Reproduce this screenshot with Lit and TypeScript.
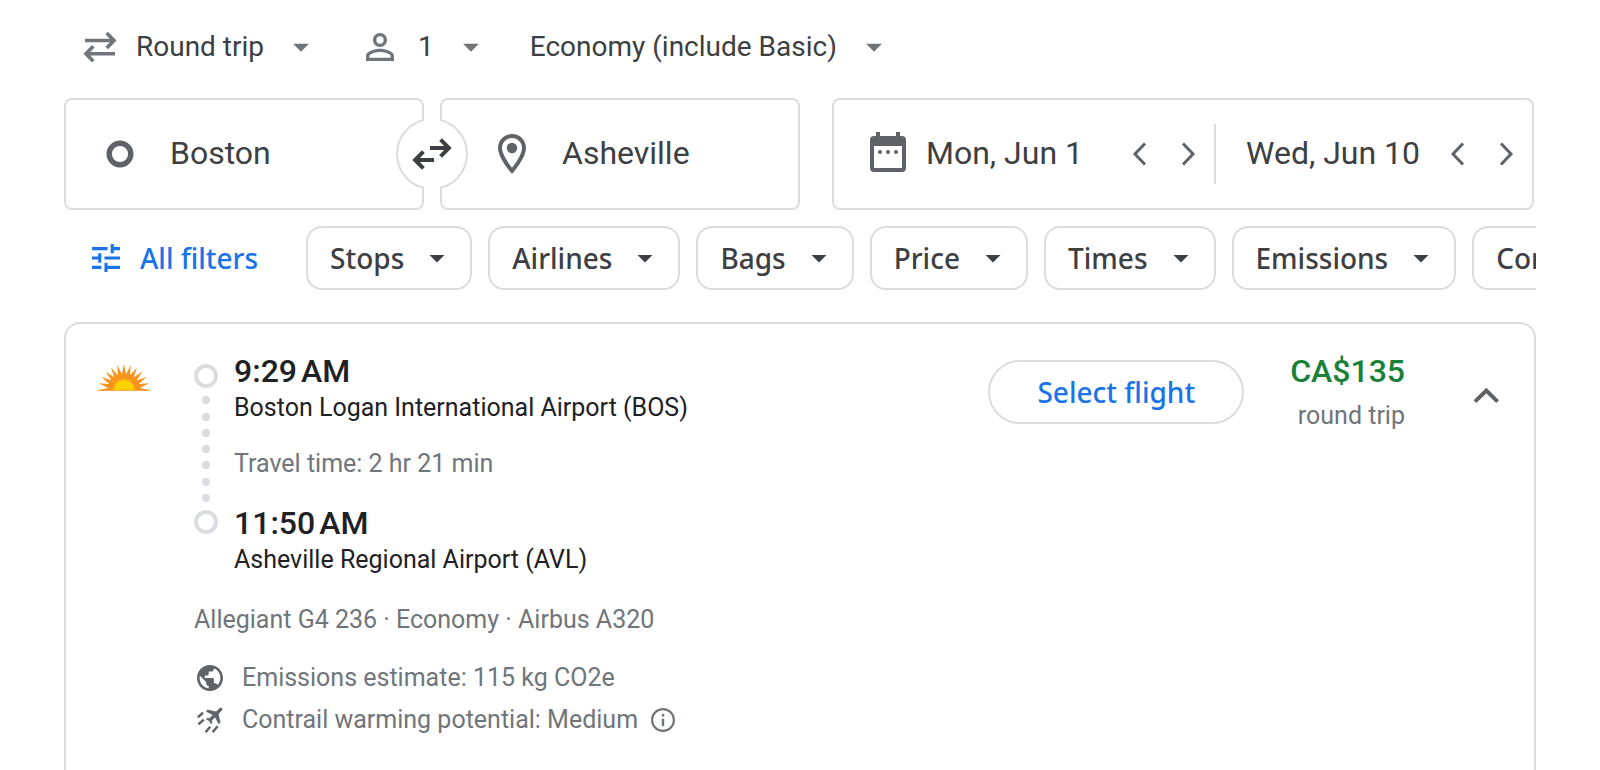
import { LitElement, html, css } from "lit";
import { customElement, state } from "lit/decorators.js";

const FILTERS = ["Stops", "Airlines", "Bags", "Price", "Times", "Emissions", "Connecting airports"];

const caret = html`<svg class="caret" viewBox="0 0 24 24" aria-hidden="true"><path d="M7 10l5 5 5-5z" /></svg>`;

const chevron = (d: string) =>
  html`<svg class="line-icon chevron" viewBox="0 0 36 36" aria-hidden="true"><path d=${d} /></svg>`;

/** Points of a half-circle star whose centre is (26, 26). */
function rays(count: number, outer: number, inner: number): string {
  const pts: string[] = [];
  const steps = (count - 1) * 2;
  for (let i = 0; i <= steps; i++) {
    const r = i % 2 === 0 ? outer : inner;
    const a = Math.PI * (1 - i / steps);
    pts.push(`${(26 + r * Math.cos(a)).toFixed(2)},${(26 - r * Math.sin(a)).toFixed(2)}`);
  }
  return pts.join(" ");
}

@customElement("app-root")
class AppRoot extends LitElement {
  @state() private from = "Boston";
  @state() private to = "Asheville";

  static styles = css`
    :host {
      display: flex;
      flex-direction: column;
      box-sizing: border-box;
      min-height: 100vh;
      padding: 28px 64px 0;
      background: #fff;
      color: #3c4043;
      font-family: Roboto, "Liberation Sans", sans-serif;
      font-size: 28px;
      line-height: 36px;
    }
    * { box-sizing: border-box; }
    button, input, select {
      margin: 0;
      padding: 0;
      border: 0;
      background: none;
      color: inherit;
      font: inherit;
      cursor: pointer;
    }
    svg { display: block; flex: none; fill: currentColor; }
    .caret { width: 36px; height: 36px; pointer-events: none; }

    .trip { display: flex; align-items: center; gap: 40px; padding-left: 18px; }
    .option { display: flex; align-items: center; }
    .option select { appearance: none; field-sizing: content; }
    .option .caret { width: 38px; height: 38px; margin-left: 18px; color: #70757a; }
    .option .lead { margin-right: 18px; color: #70757a; }
    .line-icon { fill: none; stroke: currentColor; }
    .both-ways { width: 36px; height: 36px; stroke-width: 3.6; }
    .person { width: 40px; height: 28px; }

    .search {
      display: grid;
      grid-template-columns: 736fr 702fr;
      gap: 32px;
      margin-top: 32px;
      padding-right: 2px;
    }
    .places { position: relative; display: grid; grid-template-columns: 1fr 1fr; gap: 16px; }
    .box {
      display: flex;
      align-items: center;
      min-width: 0;
      height: 112px;
      border: 2px solid #dadce0;
      border-radius: 8px;
    }
    .box input {
      flex: 1;
      width: 0;
      min-width: 0;
      height: 64px;
      padding-bottom: 2px;
      font-size: 32px;
      outline: none;
    }
    .box label { display: flex; flex: none; color: #5f6368; }
    .origin { padding-left: 40px; }
    .box label + input { margin-left: 36px; }
    .circle { width: 28px; height: 28px; stroke-width: 5.4; }
    .destination { padding-left: 56px; }
    .pin { width: 28px; height: 40px; }
    .swap {
      position: absolute;
      top: 50%;
      left: 50%;
      width: 72px;
      height: 72px;
      transform: translate(-50%, -50%);
      border: 2px solid #dadce0;
      border-radius: 50%;
      background: #fff;
      display: flex;
      align-items: center;
      justify-content: center;
    }
    .swap::before {
      content: "";
      position: absolute;
      inset: -2px 26px;
      background: #fff;
    }
    .swap svg { position: relative; width: 40px; height: 40px; stroke-width: 4; }

    .dates { display: grid; grid-template-columns: 382fr 316fr; }
    .date { display: flex; align-items: center; min-width: 0; height: 60px; padding-right: 2px; }
    .depart { padding-left: 36px; border-right: 2px solid #dadce0; }
    .depart label + input { margin-left: 20px; }
    .return { padding-left: 30px; }
    .calendar { width: 36px; height: 44px; }
    .step {
      display: flex;
      flex: none;
      align-items: center;
      justify-content: center;
      width: 48px;
      height: 48px;
      color: #5f6368;
    }
    .chevron { width: 36px; height: 36px; stroke-width: 3; }

    .filters {
      display: flex;
      gap: 16px;
      margin-top: 16px;
      overflow: hidden;
      font-family: "Noto Sans", sans-serif;
      font-weight: 500;
    }
    .all {
      display: flex;
      flex: none;
      align-items: center;
      gap: 20px;
      height: 64px;
      padding: 0 32px 0 28px;
      color: #1a73e8;
    }
    .tune { width: 28px; height: 28px; }
    .chip {
      display: flex;
      flex: none;
      align-items: center;
      gap: 15px;
      height: 64px;
      padding: 0 15px 0 22px;
      border: 2px solid #dadce0;
      border-radius: 16px;
      white-space: nowrap;
    }

    .card {
      display: flex;
      flex: 1;
      align-items: flex-start;
      margin-top: 32px;
      padding: 28px 28px 32px 32px;
      border: 2px solid #dadce0;
      border-bottom: 0;
      border-radius: 16px 16px 0 0;
      color: #70757a;
      font-size: 25px;
      line-height: 32px;
    }
    .logo { width: 52px; height: 28px; margin-top: 12px; }
    .details { flex: 1; min-width: 0; margin-left: 44px; }
    .leg { display: grid; grid-template-columns: 24px 1fr; column-gap: 16px; }
    .track {
      display: flex;
      flex-direction: column;
      align-items: center;
      justify-content: space-between;
      padding: 12px 0 42px;
    }
    .stop { width: 24px; height: 24px; border: 4px solid #dadce0; border-radius: 50%; }
    .dot { width: 8px; height: 8px; border-radius: 50%; background: #dadce0; }
    .time, .price { font-size: 32px; font-weight: 500; line-height: 38px; }
    .time, .airport { color: #202124; }
    p { margin: 0; }
    .airport { margin-top: 2px; }
    .travel { margin: 24px 0; }
    .flight { margin-top: 28px; }
    .facts { display: grid; row-gap: 10px; margin-top: 26px; }
    .fact { display: flex; align-items: center; gap: 19px; padding-left: 3px; }
    .fact svg { width: 26px; height: 26px; color: #5f6368; }
    .info { display: flex; margin-left: -6px; }
    .info svg { width: 24px; height: 24px; color: #70757a; }

    .select {
      flex: none;
      height: 64px;
      margin-top: 8px;
      padding: 0 47px;
      border: 2px solid #dadce0;
      border-radius: 32px;
      color: #1a73e8;
      font: 500 28px/36px "Noto Sans", sans-serif;
    }
    .fare { flex: none; margin-left: 46px; text-align: right; }
    .price { color: #188038; }
    .fare-type { margin-top: 10px; }
    .collapse {
      display: flex;
      flex: none;
      width: 40px;
      height: 40px;
      margin: 24px 0 0 61px;
      color: #5f6368;
    }
    .collapse svg { width: 40px; height: 40px; stroke-width: 4; }
  `;

  private swap() {
    [this.from, this.to] = [this.to, this.from];
  }

  private steps(label: string) {
    return html`
      <button class="step" aria-label="Earlier ${label}">${chevron("M23 7.5 13 18l10 10.5")}</button>
      <button class="step" aria-label="Later ${label}">${chevron("M13 7.5 23 18 13 28.5")}</button>
    `;
  }

  render() {
    return html`
      <div class="trip">
        <div class="option">
          <svg class="lead line-icon both-ways" viewBox="0 0 36 36" aria-hidden="true">
            <path d="M3 11.5h29M24.7 4l7.3 7.5-7.3 7.5M33 24.7H4M11.3 17.2 4 24.7l7.3 7.5" />
          </svg>
          <select aria-label="Ticket type"><option>Round trip</option></select>
          ${caret}
        </div>
        <button class="option" aria-label="1 passenger">
          <svg class="lead person" viewBox="4 4 16 16" aria-hidden="true">
            <path d="M12 5.9a2.1 2.1 0 1 1 0 4.2 2.1 2.1 0 0 1 0-4.2m0 9c2.97 0 6.1 1.46 6.1 2.1v1.1H5.9V17c0-.64 3.13-2.1 6.1-2.1M12 4C9.79 4 8 5.79 8 8s1.79 4 4 4 4-1.79 4-4-1.79-4-4-4zm0 9c-2.67 0-8 1.34-8 4v3h16v-3c0-2.66-5.33-4-8-4z" />
          </svg>
          <span>1</span>
          ${caret}
        </button>
        <div class="option">
          <select aria-label="Seating class"><option>Economy (include Basic)</option></select>
          ${caret}
        </div>
      </div>

      <div class="search">
        <div class="places">
          <div class="box origin">
            <label for="from" aria-label="Where from?">
              <svg class="line-icon circle" viewBox="0 0 28 28"><circle cx="14" cy="14" r="10.8" /></svg>
            </label>
            <input id="from" .value=${this.from} />
          </div>
          <div class="box destination">
            <label for="to" aria-label="Where to?">
              <svg class="pin" viewBox="5 2 14 20">
                <path d="M12 2C8.1 2 5 5.1 5 9c0 5.2 7 13 7 13s7-7.8 7-13c0-3.9-3.1-7-7-7zM7 9c0-2.8 2.2-5 5-5s5 2.2 5 5c0 2.9-2.9 7.2-5 9.9C9.9 16.2 7 11.8 7 9z" />
                <circle cx="12" cy="9" r="2.6" />
              </svg>
            </label>
            <input id="to" .value=${this.to} />
          </div>
          <button class="swap" aria-label="Swap origin and destination" @click=${this.swap}>
            <svg class="line-icon" viewBox="0 0 40 40" aria-hidden="true">
              <path d="M18 14h19M28.6 5.7l8.3 8.3-8.3 8.3M22 26H3M11.4 17.7 3.1 26l8.3 8.3" />
            </svg>
          </button>
        </div>

        <div class="box dates">
          <div class="date depart">
            <label for="depart" aria-label="Departure">
              <svg class="calendar" viewBox="0 0 36 44">
                <path fill-rule="evenodd" d="M6 0h4v4h16V0h4v4h2a4 4 0 0 1 4 4v28a4 4 0 0 1-4 4H4a4 4 0 0 1-4-4V8a4 4 0 0 1 4-4h2zM4 14v22h28V14z" />
                <circle cx="10" cy="20" r="2" /><circle cx="18" cy="20" r="2" /><circle cx="26" cy="20" r="2" />
              </svg>
            </label>
            <input id="depart" value="Mon, Jun 1" />
            ${this.steps("departure")}
          </div>
          <div class="date return">
            <input aria-label="Return" value="Wed, Jun 10" />
            ${this.steps("return")}
          </div>
        </div>
      </div>

      <div class="filters">
        <button class="all">
          <svg class="tune" viewBox="3 3 18 18" aria-hidden="true">
            <path d="M3 17v2h6v-2H3zM3 5v2h10V5H3zm10 16v-2h8v-2h-8v-2h-2v6h2zM7 9v2H3v2h4v2h2V9H7zm14 4v-2H11v2h10zm-6-4h2V7h4V5h-4V3h-2v6z" />
          </svg>
          All filters
        </button>
        ${FILTERS.map((name) => html`<button class="chip">${name}${caret}</button>`)}
      </div>

      <section class="card">
        <svg class="logo" viewBox="0 0 52 28" role="img" aria-label="Allegiant">
          <polygon fill="#f7941e" points=${rays(13, 26, 16)} />
          <polygon fill="#ffd200" points=${rays(13, 12, 9)} />
          <path fill="#f9a545" d="M0 26h52v1H0z" />
        </svg>

        <div class="details">
          <div class="leg">
            <div class="track" aria-hidden="true">
              <span class="stop"></span>
              ${Array.from({ length: 7 }, () => html`<span class="dot"></span>`)}
              <span class="stop"></span>
            </div>
            <div>
              <p class="time">9:29\u202fAM</p>
              <p class="airport">Boston Logan International Airport (BOS)</p>
              <p class="travel">Travel time: 2 hr 21 min</p>
              <p class="time">11:50\u202fAM</p>
              <p class="airport">Asheville Regional Airport (AVL)</p>
            </div>
          </div>
          <p class="flight">Allegiant G4 236 · Economy · Airbus A320</p>
          <div class="facts">
            <div class="fact">
              <svg viewBox="2 2 20 20" aria-hidden="true">
                <path d="M12 2C6.48 2 2 6.48 2 12s4.48 10 10 10 10-4.48 10-10S17.52 2 12 2zm-1 17.93c-3.95-.49-7-3.85-7-7.93 0-.62.08-1.21.21-1.79L9 15v1c0 1.1.9 2 2 2v1.93zm6.9-2.54c-.26-.81-1-1.39-1.9-1.39h-1v-3c0-.55-.45-1-1-1H8v-2h2c.55 0 1-.45 1-1V7h2c1.1 0 2-.9 2-2v-.41c2.93 1.19 5 4.06 5 7.41 0 2.08-.8 3.97-2.1 5.39z" />
              </svg>
              <span>Emissions estimate: 115 kg CO2e</span>
            </div>
            <div class="fact">
              <svg viewBox="0 0 26 26" aria-hidden="true">
                <path stroke="currentColor" stroke-width=".8" transform="translate(18.2 7.9) rotate(45) scale(.92) translate(-11.5 -12)" d="M21 16v-2l-8-5V3.5c0-.83-.67-1.5-1.5-1.5S10 2.67 10 3.5V9l-8 5v2l8-2.5V19l-2 1.5V22l3.5-1 3.5 1v-1.5L13 19v-5.5l8 2.5z" />
                <path fill="none" stroke="currentColor" stroke-width="2.5" d="M.8 10.2 6 5.8M1.4 17.2l5.4-4.6M8.6 25.2l4.6-5.4M15.6 25.2l5-6" />
              </svg>
              <span>Contrail warming potential: Medium</span>
              <button class="info" aria-label="About contrail warming potential">
                <svg viewBox="2 2 20 20" aria-hidden="true">
                  <path d="M11 7h2v2h-2zm0 4h2v6h-2zm1-9C6.48 2 2 6.48 2 12s4.48 10 10 10 10-4.48 10-10S17.52 2 12 2zm0 18.2a8.2 8.2 0 1 1 0-16.4 8.2 8.2 0 0 1 0 16.4z" />
                </svg>
              </button>
            </div>
          </div>
        </div>

        <button class="select">Select flight</button>
        <div class="fare">
          <p class="price">CA$135</p>
          <p class="fare-type">round trip</p>
        </div>
        <button class="collapse" aria-label="Hide flight details">
          <svg class="line-icon" viewBox="0 0 40 40" aria-hidden="true"><path d="M9 25.6 20.3 14.6l11.3 11" /></svg>
        </button>
      </section>
    `;
  }
}
